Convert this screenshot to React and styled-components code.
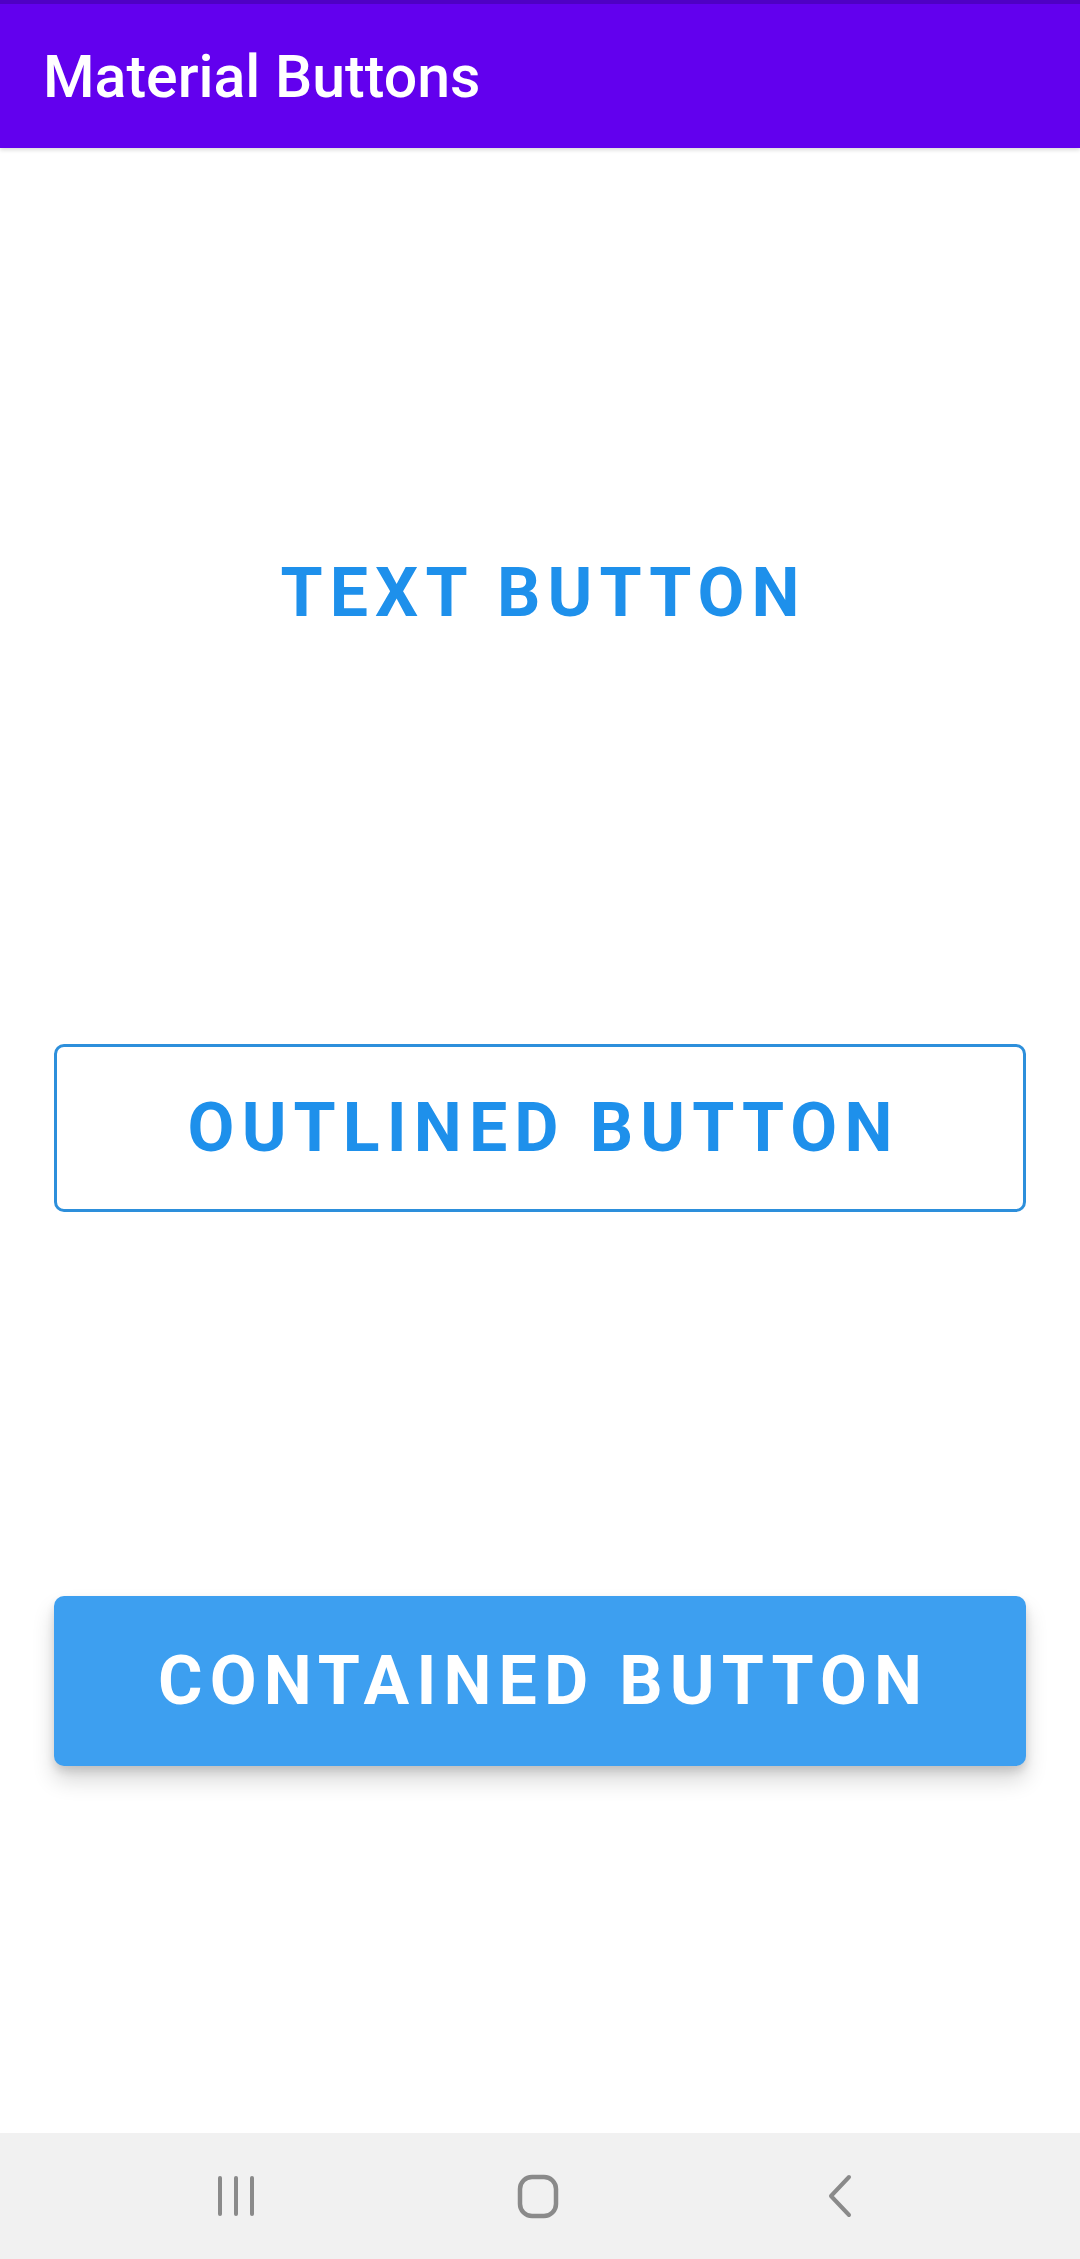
import React from "react";
import styled, { createGlobalStyle } from "styled-components";

const Global = createGlobalStyle`
  html, body { margin: 0; padding: 0; background: #ffffff; }
  body { font-family: Roboto, "Noto Sans", sans-serif; }
  #root { min-height: 100vh; }
`;

const Screen = styled.div`
  width: 1080px;
  height: 2259px;
  display: flex;
  flex-direction: column;
  background: #ffffff;
  overflow: hidden;
`;

const AppBar = styled.header`
  height: 148px;
  box-sizing: border-box;
  background: #6200ee;
  border-top: 4px solid #4f00c4;
  display: flex;
  align-items: center;
  padding: 0 43px;
  box-shadow: 0 2px 4px rgba(0, 0, 0, 0.15);
  position: relative;
  z-index: 1;
`;

const Title = styled.h1`
  margin: 0;
  color: #ffffff;
  font-family: Roboto, sans-serif;
  font-weight: 500;
  font-size: 59px;
  letter-spacing: 0;
`;

const Content = styled.main`
  flex: 1;
  display: flex;
  flex-direction: column;
  padding: 361px 54px 0;
`;

const BaseButton = styled.button`
  box-sizing: border-box;
  width: 100%;
  height: 168px;
  display: flex;
  align-items: center;
  justify-content: center;
  font-family: Roboto, sans-serif;
  font-weight: 700;
  font-size: 68px;
  letter-spacing: 0.105em;
  text-transform: uppercase;
  border-radius: 10px;
  cursor: pointer;
  padding: 0 0 0 0.105em;
`;

const TextButton = styled(BaseButton)`
  background: transparent;
  border: none;
  color: #1e90eb;
  margin-bottom: 367px;
`;

const OutlinedButton = styled(BaseButton)`
  background: transparent;
  border: 3px solid #2d8fdb;
  color: #1e90eb;
  margin-bottom: 384px;
`;

const ContainedButton = styled(BaseButton)`
  height: 170px;
  background: #3d9ff0;
  border: none;
  color: #ffffff;
  box-shadow: 0 14px 22px rgba(0, 0, 0, 0.16), 0 5px 8px rgba(0, 0, 0, 0.12);
`;

const NavBar = styled.nav`
  height: 126px;
  background: #f1f1f1;
  display: grid;
  grid-template-columns: repeat(3, 302px);
  justify-content: center;
  align-items: center;
  padding-right: 4px;
`;

const NavSlot = styled.div`
  height: 60px;
  display: flex;
  align-items: center;
  justify-content: center;
`;

export default function App() {
  return (
    <>
      <Global />
      <Screen>
        <AppBar>
          <Title>Material Buttons</Title>
        </AppBar>
        <Content>
          <TextButton>Text Button</TextButton>
          <OutlinedButton>Outlined Button</OutlinedButton>
          <ContainedButton>Contained Button</ContainedButton>
        </Content>
        <NavBar>
          <NavSlot>
            <svg width="40" height="42" viewBox="0 0 40 42">
              <g stroke="#8a8a8a" strokeWidth="4" strokeLinecap="round">
                <line x1="4" y1="3" x2="4" y2="39" />
                <line x1="20" y1="3" x2="20" y2="39" />
                <line x1="36" y1="3" x2="36" y2="39" />
              </g>
            </svg>
          </NavSlot>
          <NavSlot>
            <svg width="42" height="45" viewBox="0 0 42 45">
              <rect x="3" y="3" width="36" height="39" rx="12" fill="none" stroke="#8a8a8a" strokeWidth="4.5" />
            </svg>
          </NavSlot>
          <NavSlot>
            <svg width="26" height="44" viewBox="0 0 26 44">
              <polyline points="22,3 4,22 22,41" fill="none" stroke="#8a8a8a" strokeWidth="4" strokeLinecap="round" strokeLinejoin="round" />
            </svg>
          </NavSlot>
        </NavBar>
      </Screen>
    </>
  );
}
